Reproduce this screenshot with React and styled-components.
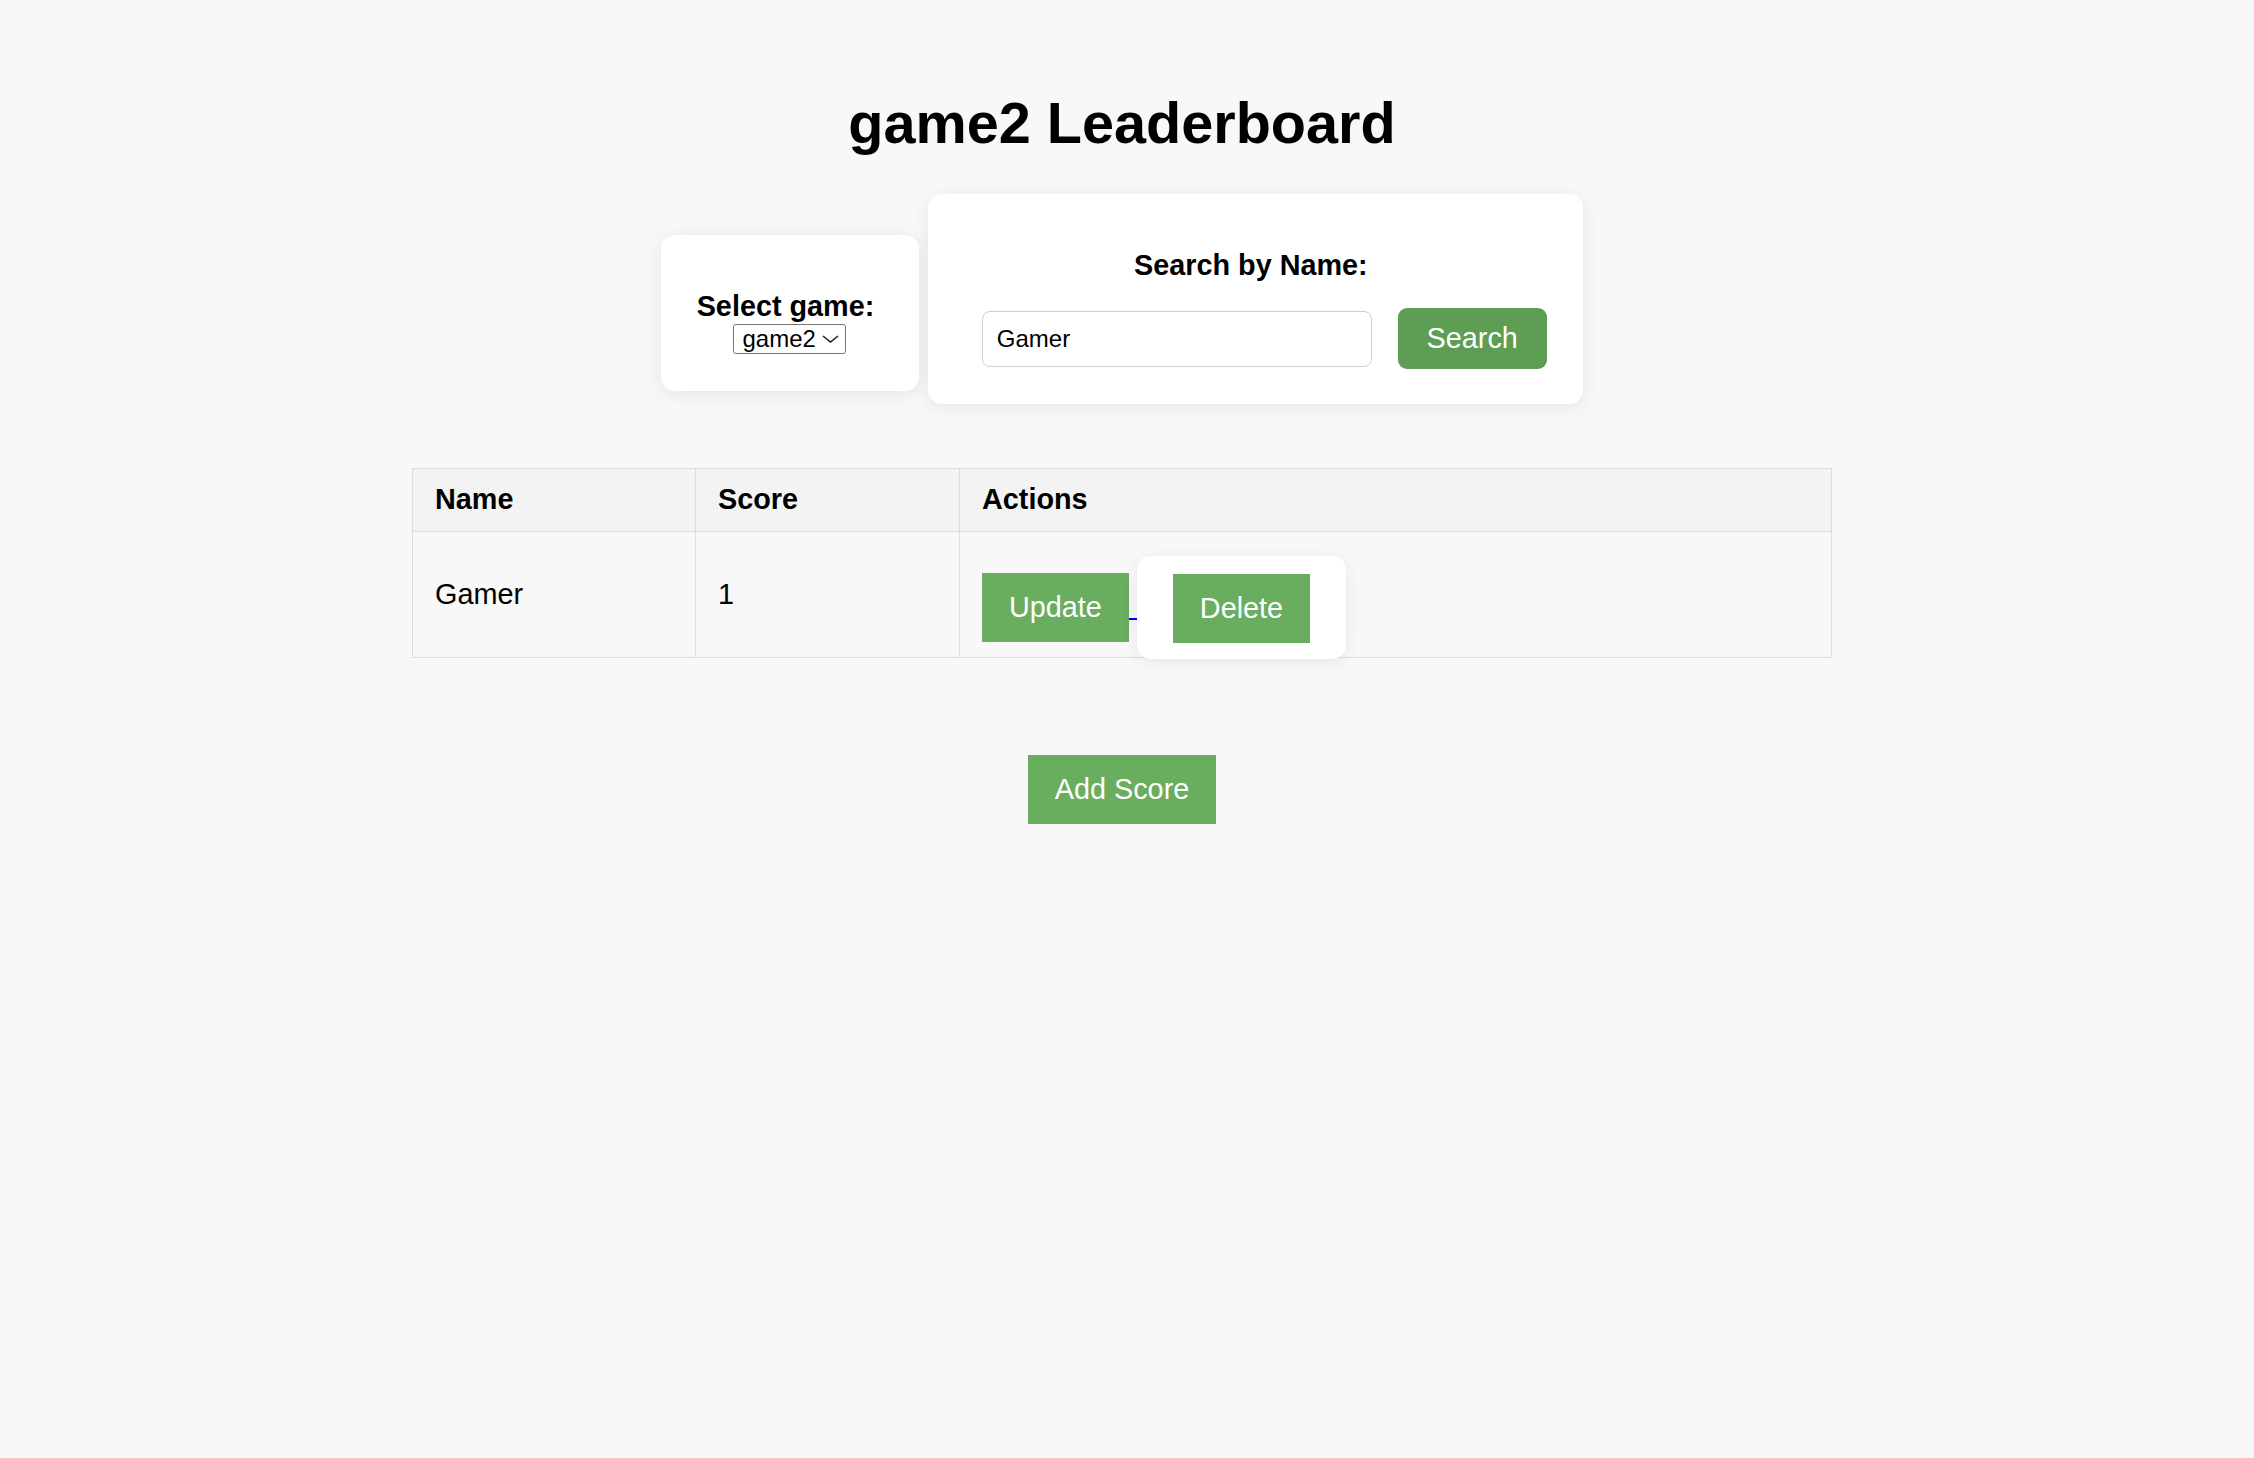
import React, { useState } from 'react';
import styled, { createGlobalStyle } from 'styled-components';

const GlobalStyle = createGlobalStyle`
  html, body {
    margin: 0;
    padding: 0;
    background: #f8f8f8;
  }
  body {
    font-family: "Liberation Sans", Arial, Helvetica, sans-serif;
    color: #000;
  }
`;

const games = ['game1', 'game2', 'game3'];

export default function App() {
  const [game, setGame] = useState('game2');
  const [query, setQuery] = useState('Gamer');
  const rows = [{ name: 'Gamer', score: 1 }];

  return (
    <>
      <GlobalStyle />
      <Page>
        <Title>{game} Leaderboard</Title>

        <CardRow>
          <SelectCard>
            <CardLabel>Select game:</CardLabel>
            <SelectRow>
              <SelectWrap>
                <GameSelect value={game} onChange={e => setGame(e.target.value)}>
                  {games.map(g => (
                    <option key={g} value={g}>{g}</option>
                  ))}
                </GameSelect>
                <Chevron width="17" height="8" viewBox="0 0 17 8">
                  <polyline points="1,1 8.5,7 16,1" fill="none" stroke="#222" strokeWidth="1.6" />
                </Chevron>
              </SelectWrap>
            </SelectRow>
          </SelectCard>

          <SearchCard onSubmit={e => e.preventDefault()}>
            <SearchLabel>Search by Name:</SearchLabel>
            <SearchRow>
              <SearchInput value={query} onChange={e => setQuery(e.target.value)} />
              <SearchButton type="submit">Search</SearchButton>
            </SearchRow>
          </SearchCard>
        </CardRow>

        <Table>
          <colgroup>
            <col style={{ width: 283 }} />
            <col style={{ width: 264 }} />
            <col />
          </colgroup>
          <thead>
            <tr>
              <Th>Name</Th>
              <Th>Score</Th>
              <Th>Actions</Th>
            </tr>
          </thead>
          <tbody>
            {rows.map(r => (
              <tr key={r.name}>
                <Td>{r.name}</Td>
                <Td>{r.score}</Td>
                <ActionsTd>
                  <ActionsWrap>
                    <UpdateLink href="#">
                      <ActionButton type="button">Update</ActionButton>
                      <LinkGap />
                    </UpdateLink>
                    <DeleteForm onSubmit={e => e.preventDefault()}>
                      <ActionButton type="submit">Delete</ActionButton>
                    </DeleteForm>
                  </ActionsWrap>
                </ActionsTd>
              </tr>
            ))}
          </tbody>
        </Table>

        <AddButton type="button">Add Score</AddButton>
      </Page>
    </>
  );
}

// Styled Components
const Page = styled.div`
  display: flex;
  flex-direction: column;
  align-items: center;
  padding: 90px 10px 0 0;
  min-height: 100vh;
  box-sizing: border-box;
`;

const Title = styled.h1`
  margin: 0;
  font-size: 57.6px;
  line-height: 66px;
  font-weight: 700;
`;

const CardRow = styled.div`
  display: flex;
  align-items: flex-start;
  justify-content: center;
  gap: 9px;
  margin-top: 38px;
`;

const Card = styled.div`
  background: #fff;
  border-radius: 14px;
  box-shadow: 0 3px 18px rgba(0, 0, 0, 0.08);
  box-sizing: border-box;
  text-align: center;
`;

const SelectCard = styled(Card)`
  margin-top: 41px;
  padding: 55px 40px 37px;
`;

const SearchCard = styled(Card).attrs({ as: 'form' })`
  width: 655px;
  padding: 55px 36px 35px;
`;

const CardLabel = styled.label`
  display: block;
  font-size: 28.8px;
  line-height: 33px;
  font-weight: 700;
  margin: 0 4.5px 1px -4.5px;
`;

const SearchLabel = styled(CardLabel)`
  margin-bottom: 26px;
`;

const SelectRow = styled.div`
  display: flex;
  justify-content: center;
`;

const SelectWrap = styled.div`
  position: relative;
  display: flex;
`;

const GameSelect = styled.select`
  appearance: none;
  -webkit-appearance: none;
  width: 113px;
  height: 30px;
  box-sizing: border-box;
  padding: 0 30px 0 8px;
  border: 1px solid #767676;
  border-radius: 3px;
  background: #fff;
  color: #000;
  font-family: "Liberation Sans", Arial, sans-serif;
  font-size: 24px;
  line-height: 28px;
`;

const Chevron = styled.svg`
  position: absolute;
  right: 7px;
  top: 11px;
  pointer-events: none;
`;

const SearchRow = styled.div`
  display: flex;
  align-items: center;
  gap: 26px;
  padding-left: 18px;
`;

const SearchInput = styled.input`
  width: 390px;
  height: 56px;
  box-sizing: border-box;
  padding: 0 14px;
  border: 1px solid #cfcfcf;
  border-radius: 8px;
  font-family: "Liberation Sans", Arial, sans-serif;
  font-size: 24px;
  color: #000;
  background: #fff;
  outline: none;
`;

const SearchButton = styled.button`
  height: 61px;
  padding: 0 29px;
  border: none;
  border-radius: 9px;
  background: #5d9e54;
  color: #fff;
  font-family: "Liberation Sans", Arial, sans-serif;
  font-size: 28.8px;
  cursor: pointer;
`;

const Table = styled.table`
  width: 1420px;
  margin-top: 64px;
  border-collapse: collapse;
  table-layout: fixed;
  font-size: 28.8px;
  line-height: 33px;
`;

const Th = styled.th`
  background: #f3f3f3;
  border: 1px solid #dddddd;
  padding: 14px 22px 15px;
  text-align: left;
  font-weight: 700;
`;

const Td = styled.td`
  border: 1px solid #dddddd;
  padding: 14px 22px;
  vertical-align: middle;
`;

const ActionsTd = styled(Td)`
  padding: 24px 22px 0;
`;

const ActionsWrap = styled.div`
  display: flex;
  align-items: center;
  margin-bottom: -2px;
`;

const UpdateLink = styled.a`
  display: flex;
  text-decoration: none;
`;

const LinkGap = styled.span`
  align-self: flex-end;
  width: 8px;
  height: 2px;
  margin-bottom: 22px;
  background: #0000ee;
`;

const ActionButton = styled.button`
  padding: 18px 27px;
  border: none;
  background: #69ad5f;
  color: #fff;
  font-family: "Liberation Sans", Arial, sans-serif;
  font-size: 28.8px;
  line-height: 33px;
  cursor: pointer;
`;

const DeleteForm = styled.form`
  background: #fff;
  border-radius: 14px;
  box-shadow: 0 3px 18px rgba(0, 0, 0, 0.07);
  padding: 18px 36px 16px;
`;

const AddButton = styled(ActionButton)`
  margin-top: 97px;
`;
